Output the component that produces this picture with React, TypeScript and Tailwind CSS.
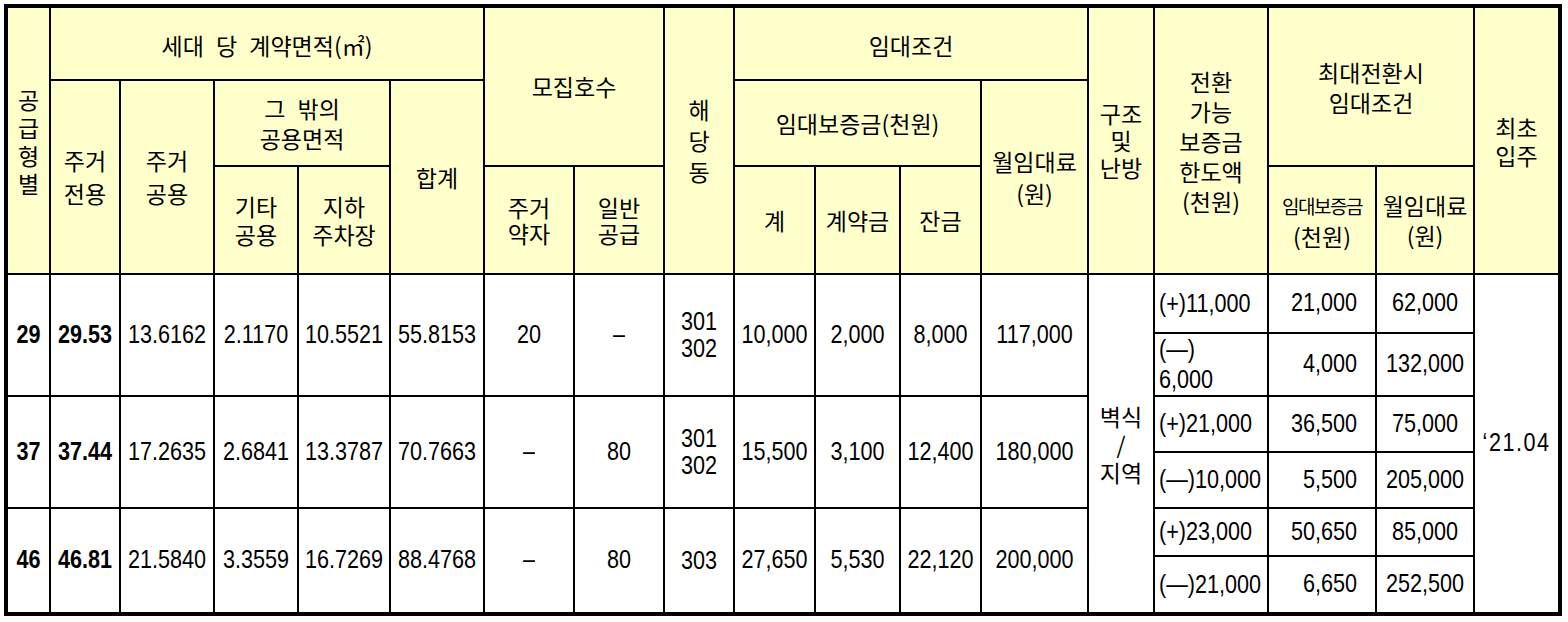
import React from 'react';

const num = "font-['Liberation_Sans','Noto_Sans_CJK_KR',sans-serif] text-[21.6px]";
const kr = "font-['Noto_Sans_CJK_KR',sans-serif] text-[23px]";

function Head({ className, children }: { className: string; children: React.ReactNode }) {
  return (
    <div className={`flex items-center justify-center bg-[#ffffcc] text-center whitespace-pre-line text-black ${kr} ${className}`}>
      {children}
    </div>
  );
}

// body cell; numbers are stretched a little to get the tall narrow digits of the original
function Cell({ className, children, plain }: { className: string; children: React.ReactNode; plain?: boolean }) {
  return (
    <div className={`flex items-center bg-white whitespace-pre-line text-black ${plain ? kr : num} ${className}`}>
      {plain ? children : <span className="inline-block scale-y-[1.17]">{children}</span>}
    </div>
  );
}

interface Row {
  type: string;
  area: string;
  common: string;
  etc: string;
  parking: string;
  total: string;
  weak: string;
  general: string;
  dong: string;
  deposit: string;
  contract: string;
  balance: string;
  rent: string;
  conv: [string, string, string][];
}

const rows: Row[] = [
  {
    type: '29', area: '29.53', common: '13.6162', etc: '2.1170', parking: '10.5521', total: '55.8153',
    weak: '20', general: '–', dong: '301\n302', deposit: '10,000', contract: '2,000', balance: '8,000', rent: '117,000',
    conv: [['(+)11,000', '21,000', '62,000'], ['(—)\n6,000', '4,000', '132,000']],
  },
  {
    type: '37', area: '37.44', common: '17.2635', etc: '2.6841', parking: '13.3787', total: '70.7663',
    weak: '–', general: '80', dong: '301\n302', deposit: '15,500', contract: '3,100', balance: '12,400', rent: '180,000',
    conv: [['(+)21,000', '36,500', '75,000'], ['(—)10,000', '5,500', '205,000']],
  },
  {
    type: '46', area: '46.81', common: '21.5840', etc: '3.3559', parking: '16.7269', total: '88.4768',
    weak: '–', general: '80', dong: '303', deposit: '27,650', contract: '5,530', balance: '22,120', rent: '200,000',
    conv: [['(+)23,000', '50,650', '85,000'], ['(—)21,000', '6,650', '252,500']],
  },
];

// main rows span two sub-rows each
const spanRows = ['row-start-4 row-span-2', 'row-start-6 row-span-2', 'row-start-8 row-span-2'];
const subRows = [
  ['row-start-4', 'row-start-5'],
  ['row-start-6', 'row-start-7'],
  ['row-start-8', 'row-start-9'],
];

export default function App() {
  return (
    <div className="min-h-screen bg-white p-1">
      <div className="grid w-fit grid-cols-[41px_68px_92px_82px_90px_92px_88px_88px_68px_79px_83px_79px_105px_64px_112px_106px_96px_83px] grid-rows-[71px_84px_106px_57px_61px_54px_54px_46px_55px] gap-[2px] border-4 border-black bg-black">
        {/* header */}
        <Head className="col-start-1 row-start-1 row-span-3 leading-[28px]">{'공\n급\n형\n별'}</Head>
        <Head className="col-start-2 col-span-5 row-start-1 pt-1 [word-spacing:7px]">세대 당 계약면적(㎡)</Head>
        <Head className="col-start-2 row-start-2 row-span-2 leading-[33px]">{'주거\n전용'}</Head>
        <Head className="col-start-3 row-start-2 row-span-2 leading-[33px]">{'주거\n공용'}</Head>
        <Head className="col-start-4 col-span-2 row-start-2 leading-[30px] [word-spacing:7px]">{'그 밖의\n공용면적'}</Head>
        <Head className="col-start-4 row-start-3 leading-[28px]">{'기타\n공용'}</Head>
        <Head className="col-start-5 row-start-3 leading-[28px]">{'지하\n주차장'}</Head>
        <Head className="col-start-6 row-start-2 row-span-2">합계</Head>
        <Head className="col-start-7 col-span-2 row-start-1 row-span-2">모집호수</Head>
        <Head className="col-start-7 row-start-3 leading-[26px]">{'주거\n약자'}</Head>
        <Head className="col-start-8 row-start-3 leading-[26px]">{'일반\n공급'}</Head>
        <Head className="col-start-9 row-start-1 row-span-3 leading-[31px]">{'해\n당\n동'}</Head>
        <Head className="col-start-10 col-span-4 row-start-1 pt-1">임대조건</Head>
        <Head className="col-start-10 col-span-3 row-start-2">임대보증금(천원)</Head>
        <Head className="col-start-10 row-start-3">계</Head>
        <Head className="col-start-11 row-start-3">계약금</Head>
        <Head className="col-start-12 row-start-3">잔금</Head>
        <Head className="col-start-13 row-start-2 row-span-2 leading-[32px]">{'월임대료\n(원)'}</Head>
        <Head className="col-start-14 row-start-1 row-span-3 leading-[27px]">{'구조\n및\n난방'}</Head>
        <Head className="col-start-15 row-start-1 row-span-3 leading-[30px]">{'전환\n가능\n보증금\n한도액\n(천원)'}</Head>
        <Head className="col-start-16 col-span-2 row-start-1 row-span-2 leading-[30px]">{'최대전환시\n임대조건'}</Head>
        <Head className="col-start-16 row-start-3 leading-[30px]">
          <span>
            <span className="text-[19px] tracking-[-1.5px]">임대보증금</span>
            {'\n(천원)'}
          </span>
        </Head>
        <Head className="col-start-17 row-start-3 leading-[30px]">{'월임대료\n(원)'}</Head>
        <Head className="col-start-18 row-start-1 row-span-3 leading-[28px]">{'최초\n입주'}</Head>

        {/* body */}
        {rows.map((r, i) => (
          <React.Fragment key={r.type}>
            <Cell className={`col-start-1 ${spanRows[i]} justify-center font-bold`}>{r.type}</Cell>
            <Cell className={`col-start-2 ${spanRows[i]} justify-center font-bold`}>{r.area}</Cell>
            <Cell className={`col-start-3 ${spanRows[i]} justify-center`}>{r.common}</Cell>
            <Cell className={`col-start-4 ${spanRows[i]} justify-center`}>{r.etc}</Cell>
            <Cell className={`col-start-5 ${spanRows[i]} justify-center`}>{r.parking}</Cell>
            <Cell className={`col-start-6 ${spanRows[i]} justify-center`}>{r.total}</Cell>
            <Cell className={`col-start-7 ${spanRows[i]} justify-center`}>{r.weak}</Cell>
            <Cell className={`col-start-8 ${spanRows[i]} justify-center`}>{r.general}</Cell>
            <Cell className={`col-start-9 ${spanRows[i]} justify-center text-center leading-[23px]`}>{r.dong}</Cell>
            <Cell className={`col-start-10 ${spanRows[i]} justify-center`}>{r.deposit}</Cell>
            <Cell className={`col-start-11 ${spanRows[i]} justify-center`}>{r.contract}</Cell>
            <Cell className={`col-start-12 ${spanRows[i]} justify-center`}>{r.balance}</Cell>
            <Cell className={`col-start-13 ${spanRows[i]} justify-center`}>{r.rent}</Cell>
            {r.conv.map((c, j) => (
              <React.Fragment key={j}>
                <Cell className={`col-start-15 ${subRows[i][j]} justify-start pl-1 leading-[26px]`}>{c[0]}</Cell>
                <Cell className={`col-start-16 ${subRows[i][j]} justify-end pr-[18px]`}>{c[1]}</Cell>
                <Cell className={`col-start-17 ${subRows[i][j]} justify-center`}>{c[2]}</Cell>
              </React.Fragment>
            ))}
          </React.Fragment>
        ))}
        <Cell plain className="col-start-14 row-start-4 row-span-6 justify-center text-center leading-[28px]">{'벽식\n/\n지역'}</Cell>
        <Cell className="col-start-18 row-start-4 row-span-6 justify-center tracking-[1.5px]">‘21.04</Cell>
      </div>
    </div>
  );
}
